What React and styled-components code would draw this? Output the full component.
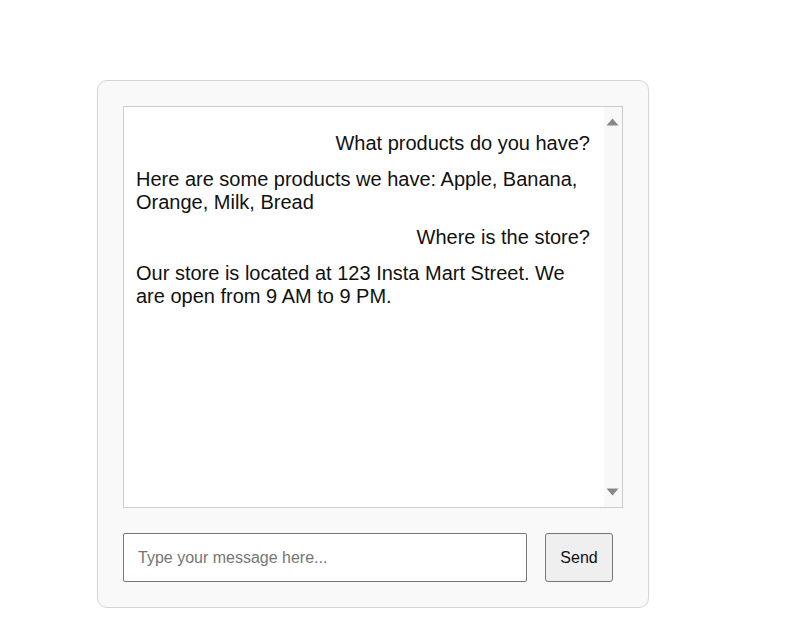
import React, { useState } from "react";
import styled, { createGlobalStyle } from "styled-components";

const GlobalStyle = createGlobalStyle`
  html, body { margin: 0; padding: 0; background: #ffffff; }
  body { font-family: "Liberation Sans", Arial, sans-serif; }
  * { box-sizing: border-box; }
`;

const Page = styled.div`
  padding: 80px 0 0 97px;
`;

const Card = styled.div`
  width: 552px;
  padding: 25px;
  background: #f9f9f9;
  border: 1px solid #d4d4d4;
  border-radius: 10px;
`;

const ChatBox = styled.div`
  width: 500px;
  height: 402px;
  background: #ffffff;
  border: 1px solid #cccccc;
  display: flex;
`;

const MessageList = styled.div`
  flex: 1;
  min-width: 0;
  overflow: hidden;
  padding: 25px 14px 12px 12px;
  display: flex;
  flex-direction: column;
  gap: 12.5px;
`;

const ScrollRail = styled.div`
  width: 18px;
  flex: none;
  background: #f8f8f8;
  display: flex;
  flex-direction: column;
  justify-content: space-between;
  align-items: center;
  padding: 11px 1px 11px 0;
`;

const Arrow = styled.svg`
  display: block;
  width: 13px;
  height: 8px;
  fill: #888888;
`;

const Message = styled.div`
  font-size: 20px;
  line-height: 23px;
  color: #111111;
  text-align: ${(p) => (p.$user ? "right" : "left")};
`;

const InputRow = styled.div`
  display: flex;
  align-items: stretch;
  margin-top: 25px;
`;

const TextInput = styled.input`
  width: 404px;
  height: 49px;
  margin-right: 18px;
  padding: 0 14px;
  font-family: "Liberation Sans", Arial, sans-serif;
  font-size: 16px;
  color: #111111;
  background: #ffffff;
  border: 1px solid #767676;
  border-radius: 2px;
  outline: none;
  &::placeholder { color: #757575; }
`;

const SendButton = styled.button`
  width: 68px;
  height: 49px;
  padding: 0;
  font-family: "Liberation Sans", Arial, sans-serif;
  font-size: 16px;
  color: #111111;
  background: #efefef;
  border: 1px solid #767676;
  border-radius: 3px;
  cursor: pointer;
`;

const messages = [
  { user: true, text: "What products do you have?" },
  { user: false, text: "Here are some products we have: Apple, Banana, Orange, Milk, Bread" },
  { user: true, text: "Where is the store?" },
  { user: false, text: "Our store is located at 123 Insta Mart Street. We are open from 9 AM to 9 PM." },
];

export default function App() {
  const [value, setValue] = useState("");
  return (
    <>
      <GlobalStyle />
      <Page>
        <Card>
          <ChatBox>
            <MessageList>
              {messages.map((m, i) => (
                <Message key={i} $user={m.user}>{m.text}</Message>
              ))}
            </MessageList>
            <ScrollRail>
              <Arrow viewBox="0 0 13 8" aria-hidden="true">
                <polygon points="6.5,0.5 12.5,7.5 0.5,7.5" />
              </Arrow>
              <Arrow viewBox="0 0 13 8" aria-hidden="true">
                <polygon points="0.5,0.5 12.5,0.5 6.5,7.5" />
              </Arrow>
            </ScrollRail>
          </ChatBox>
          <InputRow>
            <TextInput
              type="text"
              placeholder="Type your message here..."
              value={value}
              onChange={(e) => setValue(e.target.value)}
            />
            <SendButton>Send</SendButton>
          </InputRow>
        </Card>
      </Page>
    </>
  );
}
